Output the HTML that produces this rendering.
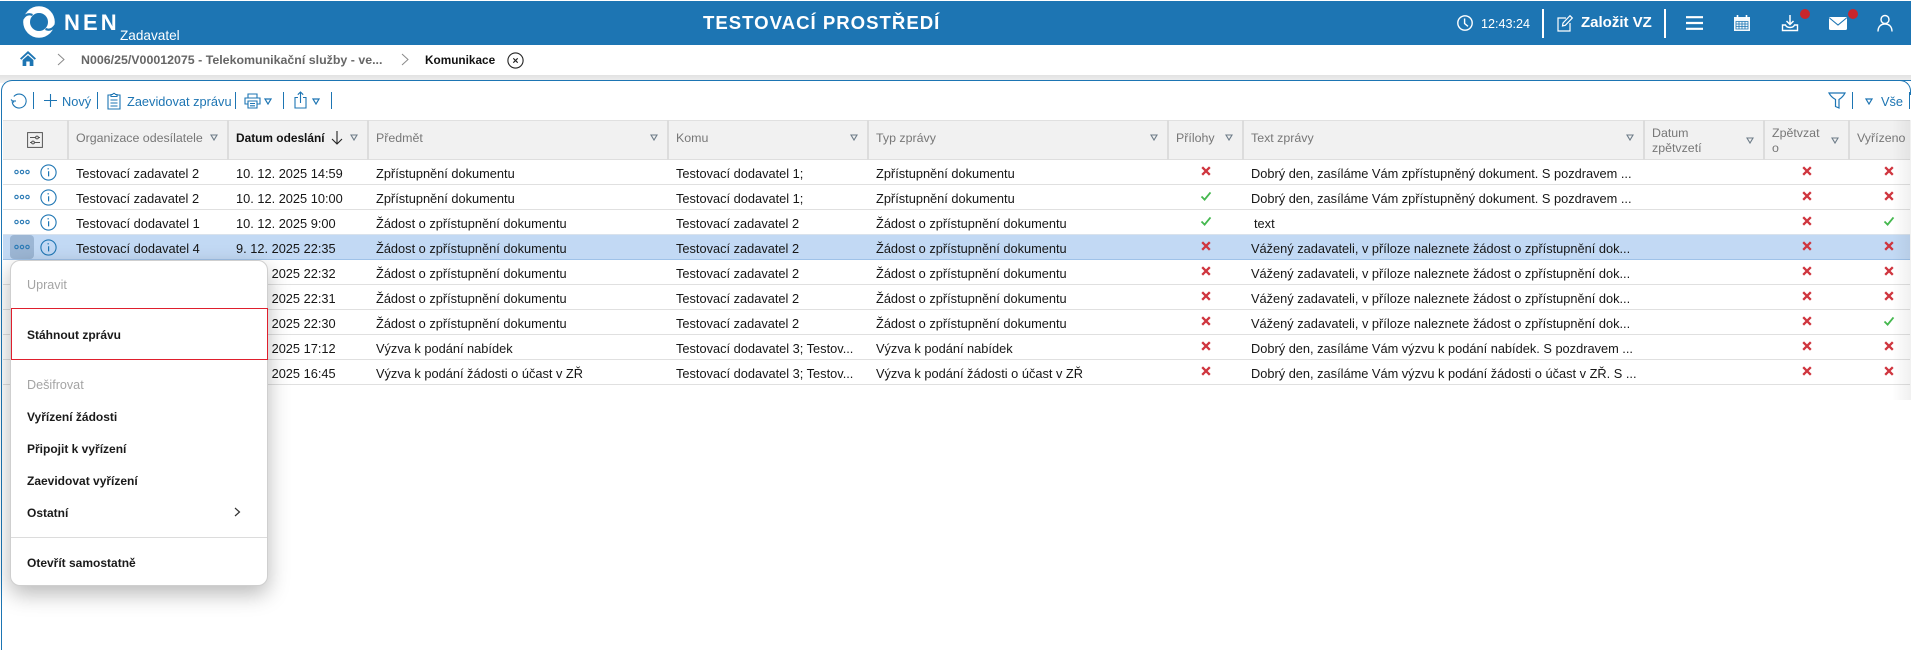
<!DOCTYPE html>
<html lang="cs"><head><meta charset="utf-8"><title>Komunikace</title>
<style>
*{box-sizing:border-box}
html,body{margin:0;padding:0;width:1911px;height:635px;overflow:hidden;background:#fff;font-family:"Liberation Sans",sans-serif;font-size:12.8px;color:#161616}
.a,.t,svg.i{position:absolute}
.t{white-space:nowrap;line-height:16px}
#hd{position:absolute;left:0;top:1px;width:1911px;height:44px;background:#1d75b3}
#sh{position:absolute;left:0;top:75px;width:1911px;height:8px;background:linear-gradient(#e2e2e2,#f2f2f2)}
#pn{position:absolute;left:1px;top:80px;width:1912px;height:570px;background:#fff;border:1.5px solid #1d75b3;border-right:0;border-radius:11px 0 0 0;border-bottom:0}
#cr{position:absolute;left:1896px;top:80px;width:15px;height:15px;border-top:1.5px solid #1d75b3;border-right:1.5px solid #1d75b3;border-radius:0 11px 0 0}
#fd{position:absolute;left:1892px;top:120px;width:19px;height:280px;background:linear-gradient(90deg,rgba(0,0,0,0),rgba(0,0,0,.06))}
.sep{position:absolute;top:92px;width:1px;height:17px;background:#1d75b3}
.b{color:#1d75b3}
#th{position:absolute;left:3px;top:120px;width:1907px;height:40px;background:#f1f1f1;border-top:1.5px solid #e0e0e0;border-bottom:1.5px solid #dedede}
.vs{position:absolute;top:120px;width:1.5px;height:40px;background:#dcdcdc}
.h{color:#777;font-size:12.4px}
.r{position:absolute;left:3px;width:1907px;height:25px;border-bottom:1px solid #e0e0e0}
.r.sel{background:#c2d9f4;border-bottom:1px solid #9fc2e8;border-top:1px solid #d9e2ec}
.r span{position:absolute;top:5px;white-space:nowrap;line-height:17px}
.r.sel span{top:4px}
.c1{left:73px}.c2{left:233px}.c3{left:373px}.c4{left:673px}.c5{left:873px}.c6{left:1248px}
#mn{position:absolute;left:10px;top:260px;width:257.5px;height:326px;background:#fff;border:1px solid #cfcfcf;border-radius:10px;box-shadow:0 8px 22px rgba(0,0,0,.28)}
.m{position:absolute;left:27px;white-space:nowrap;font-weight:bold;font-size:12px;line-height:16px;color:#1a1a1a}
.m.d{font-weight:normal;color:#a4a4a4;font-size:12.6px}
</style></head><body>
<svg width="0" height="0" style="position:absolute">
<defs>
<symbol id="x" viewBox="0 0 10 10"><path d="M1.2 1.2L8.8 8.8M8.8 1.2L1.2 8.8" stroke="#cf353e" stroke-width="2.3" fill="none"/></symbol>
<symbol id="ok" viewBox="0 0 12 10"><path d="M1.5 5.5L4.6 8.6L10.5 1.4" stroke="#45b84f" stroke-width="1.8" fill="none"/></symbol>
<symbol id="dt" viewBox="0 0 16 6"><g fill="none" stroke="#2a7ab5" stroke-width="1.1"><circle cx="2.5" cy="3" r="1.7"/><circle cx="8" cy="3" r="1.7"/><circle cx="13.5" cy="3" r="1.7"/></g></symbol>
<symbol id="in" viewBox="0 0 17 17"><circle cx="8.5" cy="8.5" r="7.6" fill="none" stroke="#1d75b3" stroke-width="1.1"/><path d="M7.5 4.8h1.4M8.6 7.2v5.2" stroke="#1d75b3" stroke-width="1.2" fill="none"/></symbol>
<symbol id="tr" viewBox="0 0 8 7"><path d="M1 1H7L4 6Z" fill="none" stroke="#6d7c88" stroke-width="1.1"/></symbol>
<symbol id="trb" viewBox="0 0 8 7"><path d="M1 1H7L4 6Z" fill="none" stroke="#1d75b3" stroke-width="1.2"/></symbol>
</defs></svg>

<div id="hd"></div>
<!-- logo -->
<svg class="i" style="left:22px;top:5px" width="34" height="34" viewBox="0 0 34 34"><circle cx="17" cy="17" r="15.8" fill="#fff"/><circle cx="17" cy="17" r="9" fill="#1d75b3"/><path d="M0.5 14Q4.5 7.5 10.5 10" fill="none" stroke="#1d75b3" stroke-width="2.2"/><path d="M33.5 20Q29.5 26.5 23.5 24" fill="none" stroke="#1d75b3" stroke-width="2.2"/></svg>
<div class="t" style="left:64px;top:10px;color:#fff;font-weight:bold;font-size:22px;line-height:26px;letter-spacing:3.1px">NEN</div>
<div class="t" style="left:120px;top:28px;color:#fff;font-size:13.6px">Zadavatel</div>
<div class="t" style="left:703px;top:13px;color:#fff;font-weight:bold;font-size:18.6px;line-height:20px;letter-spacing:1px">TESTOVACÍ PROSTŘEDÍ</div>
<svg class="i" style="left:1456px;top:14px" width="18" height="18" viewBox="0 0 18 18"><circle cx="9" cy="9" r="7.2" fill="none" stroke="#fff" stroke-width="1.4"/><path d="M8.6 4.5V9.5L12 12.4" fill="none" stroke="#fff" stroke-width="1.4"/></svg>
<div class="t" style="left:1481px;top:16px;color:#fff;font-size:12.6px">12:43:24</div>
<div class="a" style="left:1542px;top:9px;width:2px;height:29px;background:#fff"></div>
<svg class="i" style="left:1556px;top:14px" width="18" height="18" viewBox="0 0 18 18"><path d="M10 4H2V17H14V9" fill="none" stroke="#fff" stroke-width="1.2"/><path d="M6.5 12L7 9L14 1.7L16.3 4L9.3 11.3Z" fill="none" stroke="#fff" stroke-width="1.2"/></svg>
<div class="t" style="left:1581px;top:15px;color:#fff;font-weight:bold;font-size:15px">Založit VZ</div>
<div class="a" style="left:1664px;top:9px;width:2px;height:29px;background:#fff"></div>
<svg class="i" style="left:1686px;top:15px" width="17" height="16" viewBox="0 0 17 16"><path d="M0 2.2H17M0 8H17M0 13.8H17" stroke="#fff" stroke-width="2.2"/></svg>
<svg class="i" style="left:1733px;top:14px" width="18" height="18" viewBox="0 0 18 18"><rect x="1" y="3" width="16" height="14" fill="#fff" opacity=".95"/><path d="M4.5 1V5M13.5 1V5" stroke="#fff" stroke-width="1.6"/><path d="M3 7.5H15V15H3ZM3 10H15M3 12.5H15M6 7.5V15M9 7.5V15M12 7.5V15" fill="none" stroke="#1d75b3" stroke-width=".8"/></svg>
<svg class="i" style="left:1781px;top:14px" width="18" height="18" viewBox="0 0 18 18"><path d="M9 1V10M5.5 7L9 10.5L12.5 7" fill="none" stroke="#fff" stroke-width="1.5"/><path d="M1.5 11V16.5H16.5V11H13.5Q12.5 13.5 9 13.5Q5.5 13.5 4.5 11Z" fill="none" stroke="#fff" stroke-width="1.4"/></svg>
<div class="a" style="left:1800px;top:9px;width:10px;height:10px;border-radius:50%;background:#c8262c"></div>
<svg class="i" style="left:1829px;top:17px" width="18" height="13" viewBox="0 0 18 13"><rect width="18" height="13" rx="1.5" fill="#fff"/><path d="M.5 1L9 8L17.5 1" fill="none" stroke="#1d75b3" stroke-width="1.1"/></svg>
<div class="a" style="left:1848px;top:9px;width:10px;height:10px;border-radius:50%;background:#c8262c"></div>
<svg class="i" style="left:1877px;top:14px" width="16" height="18" viewBox="0 0 16 18"><circle cx="8" cy="5.5" r="4" fill="none" stroke="#fff" stroke-width="1.4"/><path d="M1 17.5C1 12.5 4 10 8 10C12 10 15 12.5 15 17.5" fill="none" stroke="#fff" stroke-width="1.4"/></svg>

<!-- breadcrumb -->
<svg class="i" style="left:20px;top:51px" width="16" height="15" viewBox="0 0 16 15"><path d="M8 0L0 7.5L1.3 8.7L8 2.6L14.7 8.7L16 7.5Z" fill="#1d75b3"/><path d="M2.6 9L8 4.2L13.4 9V15H9.7V10.5H6.3V15H2.6Z" fill="#1d75b3"/></svg>
<svg class="i" style="left:57px;top:53px" width="8" height="13" viewBox="0 0 8 13"><path d="M1 1L7 6.5L1 12" fill="none" stroke="#8a8a8a" stroke-width="1"/></svg>
<div class="t" style="left:81px;top:52px;color:#666;font-weight:bold;font-size:12.4px">N006/25/V00012075 - Telekomunikační služby - ve...</div>
<svg class="i" style="left:401px;top:53px" width="8" height="13" viewBox="0 0 8 13"><path d="M1 1L7 6.5L1 12" fill="none" stroke="#8a8a8a" stroke-width="1"/></svg>
<div class="t" style="left:425px;top:52px;color:#111;font-weight:bold;font-size:11.8px">Komunikace</div>
<svg class="i" style="left:507px;top:52px" width="17" height="17" viewBox="0 0 17 17"><circle cx="8.5" cy="8.5" r="7.6" fill="none" stroke="#222" stroke-width="1.1"/><path d="M6.3 6.3L10.7 10.7M10.7 6.3L6.3 10.7" stroke="#222" stroke-width="1.1"/></svg>

<div id="sh"></div>
<div id="pn"></div>
<div id="cr"></div>

<!-- toolbar -->
<svg class="i" style="left:10px;top:92px" width="18" height="18" viewBox="0 0 18 18"><path d="M3.8 4.5A7 7 0 1 1 2.2 10" fill="none" stroke="#1d75b3" stroke-width="1.1"/><path d="M1 7.5L4 10.5" fill="none" stroke="#1d75b3" stroke-width="1.1"/><path d="M1.5 9H6" fill="none" stroke="#1d75b3" stroke-width="1.1"/></svg>
<div class="sep" style="left:33px"></div>
<svg class="i" style="left:44px;top:94px" width="13" height="13" viewBox="0 0 13 13"><path d="M6.5 0V13M0 6.5H13" stroke="#1d75b3" stroke-width="1.1"/></svg>
<div class="t b" style="left:62px;top:94px">Nový</div>
<div class="sep" style="left:97px"></div>
<svg class="i" style="left:107px;top:92px" width="14" height="18" viewBox="0 0 14 18"><path d="M4 3H1V17H13V3H10" fill="none" stroke="#1d75b3" stroke-width="1.1"/><path d="M4 4.5V2.5H5.5Q7 .2 8.5 2.5H10V4.5Z" fill="none" stroke="#1d75b3" stroke-width="1.1"/><path d="M3.5 8H10.5M3.5 11H10.5M3.5 14H10.5" stroke="#1d75b3" stroke-width="1.1"/></svg>
<div class="t b" style="left:127px;top:94px">Zaevidovat zprávu</div>
<div class="sep" style="left:235px"></div>
<svg class="i" style="left:244px;top:93px" width="17" height="16" viewBox="0 0 17 16"><path d="M4 5V1H13V5M4 11H1V5H16V11H13" fill="none" stroke="#1d75b3" stroke-width="1.1"/><path d="M4 8H13V15H4ZM6 10.5H11M6 12.8H11" fill="none" stroke="#1d75b3" stroke-width="1.1"/></svg>
<svg class="i" style="left:264px;top:98px" width="8" height="7"><use href="#trb"/></svg>
<div class="sep" style="left:283px"></div>
<svg class="i" style="left:294px;top:91px" width="13" height="18" viewBox="0 0 13 18"><path d="M4 6.5H1V17H12V6.5H9" fill="none" stroke="#1d75b3" stroke-width="1.1"/><path d="M6.5 12V1M3.8 3.7L6.5 1L9.2 3.7" fill="none" stroke="#1d75b3" stroke-width="1.1"/></svg>
<svg class="i" style="left:312px;top:98px" width="8" height="7"><use href="#trb"/></svg>
<div class="sep" style="left:331px"></div>
<svg class="i" style="left:1828px;top:92px" width="18" height="17" viewBox="0 0 18 17"><path d="M1 1H17Q15 5 11 7.5V16L7.5 14.5V7.5Q3 5 1 1Z" fill="none" stroke="#1d75b3" stroke-width="1.2"/></svg>
<div class="sep" style="left:1852px"></div>
<svg class="i" style="left:1865px;top:98px" width="8" height="7"><use href="#trb"/></svg>
<div class="t b" style="left:1881px;top:94px">Vše</div>
<div class="sep" style="left:1909px"></div>

<!-- table header -->
<div id="th"></div>
<div class="vs" style="left:67px"></div><div class="vs" style="left:227px"></div><div class="vs" style="left:367px"></div><div class="vs" style="left:667px"></div><div class="vs" style="left:867px"></div><div class="vs" style="left:1167px"></div><div class="vs" style="left:1242px"></div><div class="vs" style="left:1643px"></div><div class="vs" style="left:1763px"></div><div class="vs" style="left:1848px"></div>
<svg class="i" style="left:27px;top:132px" width="16" height="16" viewBox="0 0 16 16"><rect x=".6" y=".6" width="14.8" height="14.8" fill="none" stroke="#555" stroke-width="1"/><path d="M3 5.5H8.5M11.5 5.5H13M3 10.5H4.5M7.5 10.5H13" stroke="#555" stroke-width="1"/><circle cx="10" cy="5.5" r="1.4" fill="none" stroke="#555"/><circle cx="6" cy="10.5" r="1.4" fill="none" stroke="#555"/></svg>
<div class="t h" style="left:76px;top:130px">Organizace odesílatele</div>
<svg class="i" style="left:210px;top:134px" width="8" height="7"><use href="#tr"/></svg>
<div class="t" style="left:236px;top:130px;font-weight:bold;color:#111;font-size:11.9px">Datum odeslání</div>
<svg class="i" style="left:331px;top:131px" width="12" height="14" viewBox="0 0 12 14"><path d="M6 0V13M1 8L6 13L11 8" fill="none" stroke="#222" stroke-width="1.1"/></svg>
<svg class="i" style="left:350px;top:134px" width="8" height="7"><use href="#tr"/></svg>
<div class="t h" style="left:376px;top:130px">Předmět</div>
<svg class="i" style="left:650px;top:134px" width="8" height="7"><use href="#tr"/></svg>
<div class="t h" style="left:676px;top:130px">Komu</div>
<svg class="i" style="left:850px;top:134px" width="8" height="7"><use href="#tr"/></svg>
<div class="t h" style="left:876px;top:130px">Typ zprávy</div>
<svg class="i" style="left:1150px;top:134px" width="8" height="7"><use href="#tr"/></svg>
<div class="t h" style="left:1176px;top:130px">Přílohy</div>
<svg class="i" style="left:1225px;top:134px" width="8" height="7"><use href="#tr"/></svg>
<div class="t h" style="left:1251px;top:130px">Text zprávy</div>
<svg class="i" style="left:1626px;top:134px" width="8" height="7"><use href="#tr"/></svg>
<div class="t h" style="left:1652px;top:125px">Datum</div>
<div class="t h" style="left:1652px;top:140px">zpětvzetí</div>
<svg class="i" style="left:1746px;top:137px" width="8" height="7"><use href="#tr"/></svg>
<div class="t h" style="left:1772px;top:125px">Zpětvzat</div>
<div class="t h" style="left:1772px;top:140px">o</div>
<svg class="i" style="left:1831px;top:137px" width="8" height="7"><use href="#tr"/></svg>
<div class="t h" style="left:1857px;top:130px">Vyřízeno</div>

<!-- rows -->
<div class="r" style="top:160px"><span class="c1">Testovací zadavatel 2</span><span class="c2">10. 12. 2025 14:59</span><span class="c3">Zpřístupnění dokumentu</span><span class="c4">Testovací dodavatel 1;</span><span class="c5">Zpřístupnění dokumentu</span><span class="c6">Dobrý den, zasíláme Vám zpřístupněný dokument. S pozdravem ...</span></div>
<div class="r" style="top:185px"><span class="c1">Testovací zadavatel 2</span><span class="c2">10. 12. 2025 10:00</span><span class="c3">Zpřístupnění dokumentu</span><span class="c4">Testovací dodavatel 1;</span><span class="c5">Zpřístupnění dokumentu</span><span class="c6">Dobrý den, zasíláme Vám zpřístupněný dokument. S pozdravem ...</span></div>
<div class="r" style="top:210px"><span class="c1">Testovací dodavatel 1</span><span class="c2">10. 12. 2025 9:00</span><span class="c3">Žádost o zpřístupnění dokumentu</span><span class="c4">Testovací zadavatel 2</span><span class="c5">Žádost o zpřístupnění dokumentu</span><span class="c6" style="left:1251px">text</span></div>
<div class="r sel" style="top:234px;height:26px"><span class="c1" style="top:5px">Testovací dodavatel 4</span><span class="c2" style="top:5px">9. 12. 2025 22:35</span><span class="c3" style="top:5px">Žádost o zpřístupnění dokumentu</span><span class="c4" style="top:5px">Testovací zadavatel 2</span><span class="c5" style="top:5px">Žádost o zpřístupnění dokumentu</span><span class="c6" style="top:5px">Vážený zadavateli, v příloze naleznete žádost o zpřístupnění dok...</span></div>
<div class="r" style="top:260px"><span class="c2">9. 12. 2025 22:32</span><span class="c3">Žádost o zpřístupnění dokumentu</span><span class="c4">Testovací zadavatel 2</span><span class="c5">Žádost o zpřístupnění dokumentu</span><span class="c6">Vážený zadavateli, v příloze naleznete žádost o zpřístupnění dok...</span></div>
<div class="r" style="top:285px"><span class="c2">9. 12. 2025 22:31</span><span class="c3">Žádost o zpřístupnění dokumentu</span><span class="c4">Testovací zadavatel 2</span><span class="c5">Žádost o zpřístupnění dokumentu</span><span class="c6">Vážený zadavateli, v příloze naleznete žádost o zpřístupnění dok...</span></div>
<div class="r" style="top:310px"><span class="c2">9. 12. 2025 22:30</span><span class="c3">Žádost o zpřístupnění dokumentu</span><span class="c4">Testovací zadavatel 2</span><span class="c5">Žádost o zpřístupnění dokumentu</span><span class="c6">Vážený zadavateli, v příloze naleznete žádost o zpřístupnění dok...</span></div>
<div class="r" style="top:335px"><span class="c2">9. 12. 2025 17:12</span><span class="c3">Výzva k podání nabídek</span><span class="c4">Testovací dodavatel 3; Testov...</span><span class="c5">Výzva k podání nabídek</span><span class="c6">Dobrý den, zasíláme Vám výzvu k podání nabídek. S pozdravem ...</span></div>
<div class="r" style="top:360px"><span class="c2">9. 12. 2025 16:45</span><span class="c3">Výzva k podání žádosti o účast v ZŘ</span><span class="c4">Testovací dodavatel 3; Testov...</span><span class="c5">Výzva k podání žádosti o účast v ZŘ</span><span class="c6">Dobrý den, zasíláme Vám výzvu k podání žádosti o účast v ZŘ. S ...</span></div>
<div id="fd"></div>

<div class="a" style="left:10px;top:235px;width:24px;height:24px;border-radius:4px;background:#9cb6d4"></div>
<svg class="i" style="left:14px;top:169px" width="16" height="6"><use href="#dt"/></svg><svg class="i" style="left:40px;top:164px" width="17" height="17"><use href="#in"/></svg>
<svg class="i" style="left:14px;top:194px" width="16" height="6"><use href="#dt"/></svg><svg class="i" style="left:40px;top:189px" width="17" height="17"><use href="#in"/></svg>
<svg class="i" style="left:14px;top:219px" width="16" height="6"><use href="#dt"/></svg><svg class="i" style="left:40px;top:214px" width="17" height="17"><use href="#in"/></svg>
<svg class="i" style="left:14px;top:244px" width="16" height="6"><use href="#dt"/></svg><svg class="i" style="left:40px;top:239px" width="17" height="17"><use href="#in"/></svg>

<!-- status icons -->
<svg class="i" style="left:1201px;top:166px" width="10" height="10"><use href="#x"/></svg><svg class="i" style="left:1802px;top:166px" width="10" height="10"><use href="#x"/></svg><svg class="i" style="left:1884px;top:166px" width="10" height="10"><use href="#x"/></svg>
<svg class="i" style="left:1200px;top:191px" width="12" height="10"><use href="#ok"/></svg><svg class="i" style="left:1802px;top:191px" width="10" height="10"><use href="#x"/></svg><svg class="i" style="left:1884px;top:191px" width="10" height="10"><use href="#x"/></svg>
<svg class="i" style="left:1200px;top:216px" width="12" height="10"><use href="#ok"/></svg><svg class="i" style="left:1802px;top:216px" width="10" height="10"><use href="#x"/></svg><svg class="i" style="left:1883px;top:216px" width="12" height="10"><use href="#ok"/></svg>
<svg class="i" style="left:1201px;top:241px" width="10" height="10"><use href="#x"/></svg><svg class="i" style="left:1802px;top:241px" width="10" height="10"><use href="#x"/></svg><svg class="i" style="left:1884px;top:241px" width="10" height="10"><use href="#x"/></svg>
<svg class="i" style="left:1201px;top:266px" width="10" height="10"><use href="#x"/></svg><svg class="i" style="left:1802px;top:266px" width="10" height="10"><use href="#x"/></svg><svg class="i" style="left:1884px;top:266px" width="10" height="10"><use href="#x"/></svg>
<svg class="i" style="left:1201px;top:291px" width="10" height="10"><use href="#x"/></svg><svg class="i" style="left:1802px;top:291px" width="10" height="10"><use href="#x"/></svg><svg class="i" style="left:1884px;top:291px" width="10" height="10"><use href="#x"/></svg>
<svg class="i" style="left:1201px;top:316px" width="10" height="10"><use href="#x"/></svg><svg class="i" style="left:1802px;top:316px" width="10" height="10"><use href="#x"/></svg><svg class="i" style="left:1883px;top:316px" width="12" height="10"><use href="#ok"/></svg>
<svg class="i" style="left:1201px;top:341px" width="10" height="10"><use href="#x"/></svg><svg class="i" style="left:1802px;top:341px" width="10" height="10"><use href="#x"/></svg><svg class="i" style="left:1884px;top:341px" width="10" height="10"><use href="#x"/></svg>
<svg class="i" style="left:1201px;top:366px" width="10" height="10"><use href="#x"/></svg><svg class="i" style="left:1802px;top:366px" width="10" height="10"><use href="#x"/></svg><svg class="i" style="left:1884px;top:366px" width="10" height="10"><use href="#x"/></svg>

<!-- menu -->
<div id="mn"></div>
<div class="m d" style="top:277px">Upravit</div>
<div class="a" style="left:10.5px;top:308px;width:257px;height:52px;border:1.3px solid #df1f2d"></div>
<div class="m" style="top:327px">Stáhnout zprávu</div>
<div class="m d" style="top:377px">Dešifrovat</div>
<div class="m" style="top:409px">Vyřízení žádosti</div>
<div class="m" style="top:441px">Připojit k vyřízení</div>
<div class="m" style="top:473px">Zaevidovat vyřízení</div>
<div class="m" style="top:505px">Ostatní</div>
<svg class="i" style="left:234px;top:507px" width="7" height="10" viewBox="0 0 7 10"><path d="M1 1L5.5 5L1 9" fill="none" stroke="#333" stroke-width="1.2"/></svg>
<div class="a" style="left:11px;top:537px;width:256px;height:1px;background:#dcdcdc"></div>
<div class="m" style="top:555px">Otevřít samostatně</div>
</body></html>
